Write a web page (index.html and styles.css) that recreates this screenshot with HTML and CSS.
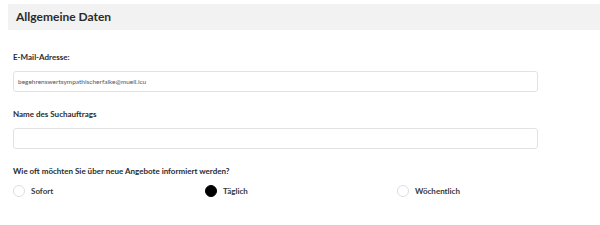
FILE: index.html
```html
<!DOCTYPE html>
<html lang="de">
<head>
    <meta charset="UTF-8">
    <title>Allgemeine Daten</title>
    <link rel="stylesheet" href="styles.css">
</head>
<body>
    <div class="panel">
        <h2 class="panel-head">Allgemeine Daten</h2>
        <div class="panel-body">
            <label class="label" for="email">E-Mail-Adresse:</label>
            <input class="field" id="email" type="text" value="begehrenswertsympathischerfalke@muell.icu">

            <label class="label" for="name">Name des Suchauftrags</label>
            <input class="field" id="name" type="text">

            <div class="label">Wie oft möchten Sie über neue Angebote informiert werden?</div>
            <div class="radios">
                <label class="radio"><span class="dot"></span>Sofort</label>
                <label class="radio"><span class="dot checked"></span>Täglich</label>
                <label class="radio"><span class="dot"></span>Wöchentlich</label>
            </div>
        </div>
    </div>
</body>
</html>
```

FILE: styles.css
```css
body {
    margin: 0;
    padding: 4px 0 0 8px;
    background-color: #fff;
    font-family: Lato, "Open Sans", sans-serif;
    color: #333;
}
.panel-head {
    margin: 0;
    height: 26px;
    line-height: 26px;
    padding-left: 8px;
    background-color: #f2f2f2;
    font-size: 12px;
    font-weight: bold;
    color: #2b2b2b;
}
.panel-body {
    padding: 21px 0 0 5px;
}
.label {
    display: block;
    font-size: 8px;
    font-weight: bold;
    color: #2b2b2b;
    line-height: 12px;
    margin-bottom: 8px;
}
.field {
    display: block;
    box-sizing: border-box;
    width: 525px;
    height: 21px;
    margin: 0 0 16px 0;
    padding: 0 4px;
    border: 1px solid #e2e2e2;
    border-radius: 3px;
    font-family: inherit;
    font-size: 6.5px;
    color: #555;
    outline: none;
}
.radios {
    display: grid;
    grid-template-columns: repeat(3, 192px);
    margin-top: 1px;
}
.radio {
    display: flex;
    align-items: center;
    gap: 6px;
    font-size: 8px;
    font-weight: bold;
    color: #3a3a3a;
}
.dot {
    width: 10px;
    height: 10px;
    border: 1px solid #ddd;
    border-radius: 50%;
    background-color: #fff;
}
.dot.checked {
    background-color: #000;
    border-color: #000;
}
```
